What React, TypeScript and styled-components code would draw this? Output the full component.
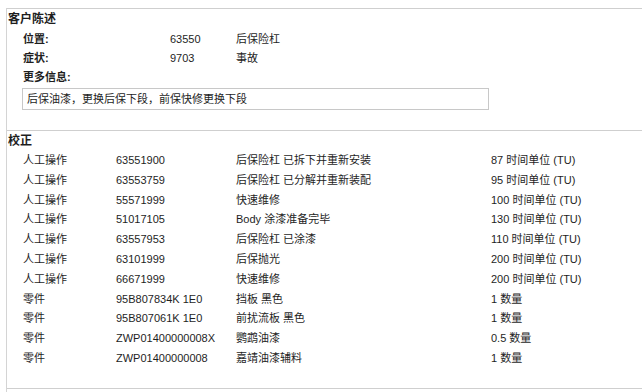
import React from 'react'
import styled, { createGlobalStyle } from 'styled-components'

const GlobalStyle = createGlobalStyle`
  body {
    margin: 0;
    background: #fff;
    font-family: "Liberation Sans", "Noto Sans CJK SC", sans-serif;
    font-size: 11px;
    color: #1e1e1e;
  }
`

type Info = { label: string; code?: string; text?: string }
type Line = { kind: string; code: string; text: string; amount: string }

const info: Info[] = [
  { label: '位置:', code: '63550', text: '后保险杠' },
  { label: '症状:', code: '9703', text: '事故' },
  { label: '更多信息:' },
]

const lines: Line[] = [
  { kind: '人工操作', code: '63551900', text: '后保险杠 已拆下并重新安装', amount: '87 时间单位 (TU)' },
  { kind: '人工操作', code: '63553759', text: '后保险杠 已分解并重新装配', amount: '95 时间单位 (TU)' },
  { kind: '人工操作', code: '55571999', text: '快速维修', amount: '100 时间单位 (TU)' },
  { kind: '人工操作', code: '51017105', text: 'Body 涂漆准备完毕', amount: '130 时间单位 (TU)' },
  { kind: '人工操作', code: '63557953', text: '后保险杠 已涂漆', amount: '110 时间单位 (TU)' },
  { kind: '人工操作', code: '63101999', text: '后保抛光', amount: '200 时间单位 (TU)' },
  { kind: '人工操作', code: '66671999', text: '快速维修', amount: '200 时间单位 (TU)' },
  { kind: '零件', code: '95B807834K 1E0', text: '挡板 黑色', amount: '1 数量' },
  { kind: '零件', code: '95B807061K 1E0', text: '前扰流板 黑色', amount: '1 数量' },
  { kind: '零件', code: 'ZWP01400000008X', text: '鹦鹉油漆', amount: '0.5 数量' },
  { kind: '零件', code: 'ZWP01400000008', text: '嘉靖油漆辅料', amount: '1 数量' },
]

export default function App() {
  return (
    <>
      <GlobalStyle />
      <Frame>
        <Section $pad={20}>
          <Title>客户陈述</Title>
          <List $top={2}>
            {info.map((i) => (
              <InfoRow key={i.label}>
                <Label>{i.label}</Label>
                <span>{i.code}</span>
                <span>{i.text}</span>
              </InfoRow>
            ))}
          </List>
          <NoteBox>后保油漆，更换后保下段，前保快修更换下段</NoteBox>
        </Section>
        <Section $pad={19}>
          <Title>校正</Title>
          <List $top={1}>
            {lines.map((l, n) => (
              <ItemRow key={n}>
                <span>{l.kind}</span>
                <span>{l.code}</span>
                <span>{l.text}</span>
                <span>{l.amount}</span>
              </ItemRow>
            ))}
          </List>
        </Section>
        <Section $pad={4} />
      </Frame>
    </>
  )
}

const Frame = styled.div`
  margin: 8px 0 0 6px;
  border-left: 1px solid #d4d4d4;
  min-height: 384px;
`

const Section = styled.section<{ $pad: number }>`
  border-top: 1px solid #cfcfcf;
  padding-bottom: ${(p) => p.$pad}px;
`

const Title = styled.div`
  font-size: 12px;
  font-weight: bold;
  line-height: 18px;
  padding: 1px 0 0 1px;
`

const List = styled.div<{ $top: number }>`
  padding-top: ${(p) => p.$top}px;
`

const InfoRow = styled.div`
  display: grid;
  grid-template-columns: 147px 66px 1fr;
  padding-left: 16px;
  line-height: 19px;
`

const Label = styled.span`
  font-weight: bold;
`

const NoteBox = styled.div`
  margin: 1px 0 0 15px;
  width: 461px;
  height: 20px;
  line-height: 20px;
  padding-left: 4px;
  border: 1px solid #c8c8c8;
`

const ItemRow = styled.div`
  display: grid;
  grid-template-columns: 93px 120px 255px 1fr;
  padding-left: 16px;
  height: 19.8px;
  line-height: 19.8px;
  white-space: nowrap;
`
